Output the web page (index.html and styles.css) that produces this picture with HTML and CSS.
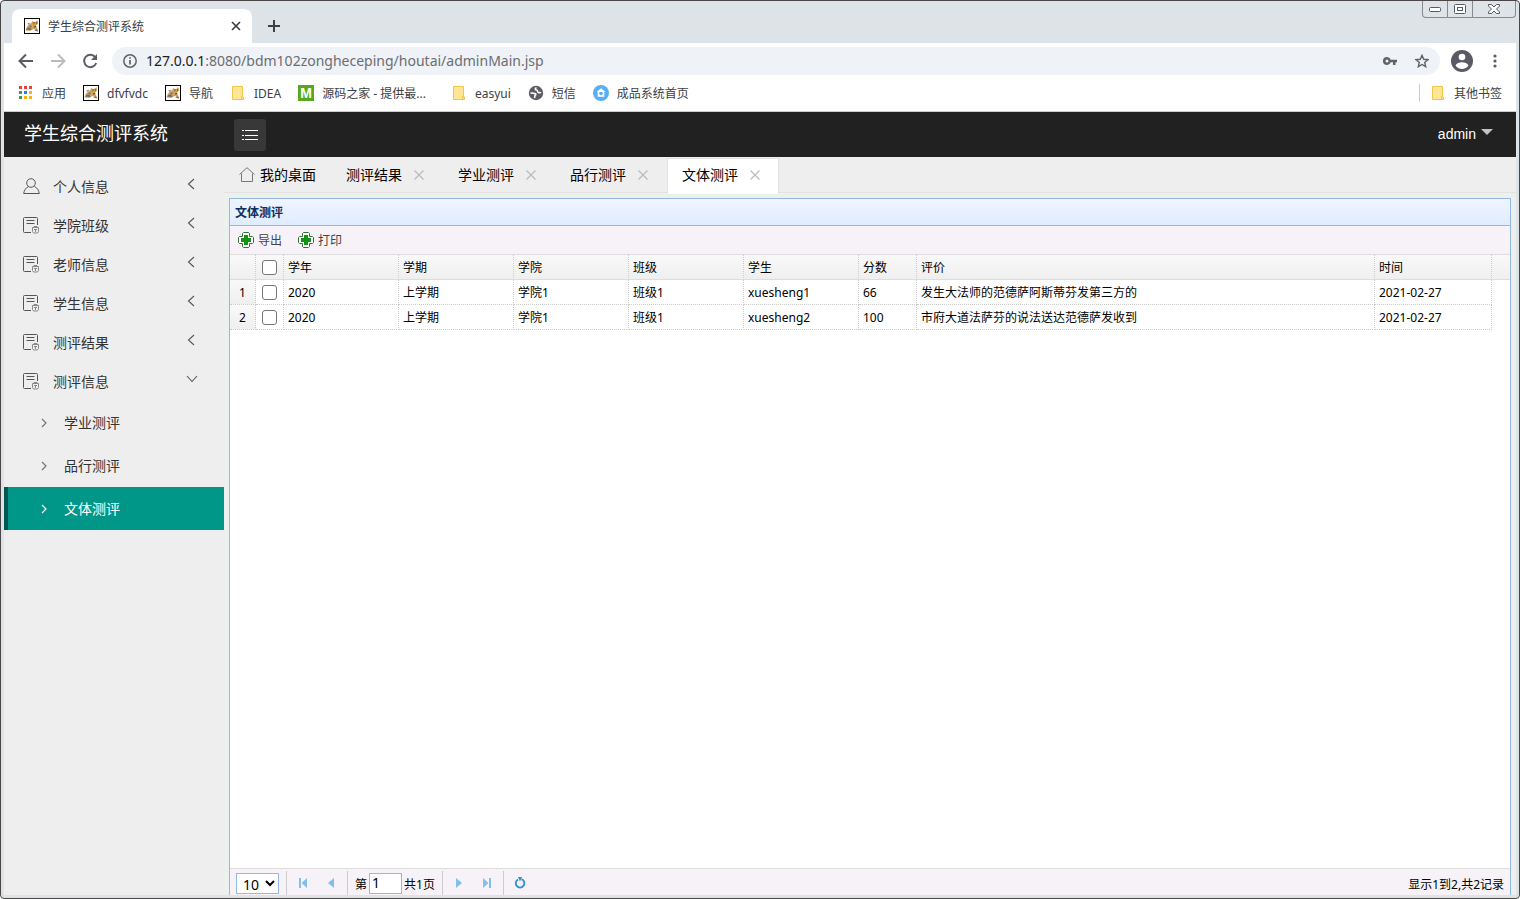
FILE: index.html
```html
<!DOCTYPE html>
<html lang="zh-CN">
<head>
<meta charset="utf-8">
<title>学生综合测评系统</title>
<link rel="stylesheet" href="styles.css">
</head>
<body>
<svg class="sprite" aria-hidden="true">
  <symbol id="cat" viewBox="0 0 16 16">
    <rect x=".5" y=".5" width="15" height="15" fill="#fff" stroke="#000"/>
    <path d="M1.500 12.500l1-3 1-1.500 2-2 2-1 .500-2 1.500 1h2l1.500-1.500.5 3-1.500 2 1 2.500 1.500 3.500-2-.5-2-2-2 .5-2.500 1.500z" fill="#c9a468"/>
    <path d="M2 12l2-2.500 2 .5 2 1.500-2 .5-2-.5zM3 6l3-1.500-1 2zM10 12l2 1 2 .500-1-2z" fill="#6f6a60"/>
    <path d="M8 3l1.500 1h2L13.500 2.500l.5 3-2 2-3-.500z" fill="#d79b33"/>
    <path d="M9.500 5h1M12 5h1M10 9l2-.5" stroke="#4a3a22" fill="none"/>
    <path d="M5 8l2-1 1 2-2 1z" fill="#8b7d69"/>
  </symbol>
  <symbol id="folder" viewBox="0 0 14 16">
    <path d="M1.500 1.500h10v10.500h1v2.500h-11z" fill="#ffe694" stroke="#f0c64a"/>
    <path d="M10.500 14.500v-3h1" fill="none" stroke="#f0c64a"/>
  </symbol>
  <symbol id="doc" viewBox="0 0 17 17">
    <path d="M14.500 8V1.500a1 1 0 0 0-1-1H1.500a1 1 0 0 0-1 1v13a1 1 0 0 0 1 1H8M3.500 3.500h8M3.500 6.500h8" fill="none" stroke="#555"/>
    <path d="M9.500 10.500h6v4l-1 1.500h-4l-1-1.500zM11 12.500h3M12.500 12v3M11 10V9.500h3v.5" fill="none" stroke="#888"/>
  </symbol>
  <symbol id="left" viewBox="0 0 8 12"><path d="M7 1L1.500 6 7 11" fill="none" stroke="#555" stroke-width="1.100"/></symbol>
  <symbol id="right" viewBox="0 0 6 10"><path d="M1 1l4 4-4 4" fill="none" stroke="currentColor" stroke-width="1.200"/></symbol>
  <symbol id="x" viewBox="0 0 10 10"><path d="M.5.500l9 9M9.500.500l-9 9" fill="none" stroke="currentColor" stroke-width="1.200"/></symbol>
  <symbol id="plus" viewBox="0 0 16 16">
    <path d="M5.500.500h5l1 1v3h3l1 1v5l-1 1h-3v3l-1 1h-5l-1-1v-3h-3l-1-1v-5l1-1h3v-3z" fill="#fff" stroke="#35703b"/>
    <path d="M6 3h4v3h3v4h-3v3H6v-3H3V6h3z" fill="#139313"/>
  </symbol>
</svg>

<div class="window">
  <div class="tabstrip">
    <div class="browser-tab">
      <svg class="i16"><use href="#cat"/></svg>
      <span class="browser-tab-title">学生综合测评系统</span>
      <button class="plain tab-close" aria-label="关闭标签页"><svg width="10" height="10" viewBox="0 0 10 10"><path d="M1 1l8 8M9 1L1 9" stroke="#3c4043" stroke-width="1.700"/></svg></button>
    </div>
    <button class="plain new-tab" aria-label="新标签页"><svg width="12" height="12" viewBox="0 0 12 12"><path d="M6 0v12M0 6h12" stroke="#3c4043" stroke-width="2"/></svg></button>
    <div class="win-controls">
      <button aria-label="最小化"><svg width="14" height="8" viewBox="0 0 14 8"><rect x="1.500" y="2.500" width="11" height="4" rx="1" fill="#fff" stroke="#555b66"/></svg></button>
      <button aria-label="还原"><svg width="14" height="12" viewBox="0 0 14 12"><rect x="1.500" y="1.500" width="11" height="9" rx="1" fill="#fff" stroke="#555b66"/><rect x="4.500" y="4.500" width="5" height="3" fill="none" stroke="#555b66"/></svg></button>
      <button class="wide" aria-label="关闭"><svg width="12" height="12" viewBox="0 0 12 12"><path d="M.5 1.500h3L6 4l2.500-2.500h3V3l-3 3 3 3v1.500h-3L6 8l-2.500 2.500h-3V9l3-3-3-3z" fill="#fff" stroke="#555b66"/></svg></button>
    </div>
  </div>

  <div class="toolbar">
    <button class="plain nav" aria-label="后退"><svg width="16" height="16" viewBox="0 0 16 16"><path d="M15 8H2M8 1.500L1.500 8 8 14.500" fill="none" stroke="#5c5b66" stroke-width="2"/></svg></button>
    <button class="plain nav" aria-label="前进"><svg width="16" height="16" viewBox="0 0 16 16"><path d="M1 8h13M8 1.500L14.500 8 8 14.500" fill="none" stroke="#bcbbc0" stroke-width="2"/></svg></button>
    <button class="plain nav" aria-label="重新加载"><svg width="16" height="16" viewBox="0 0 16 16"><path d="M13.500 4.500A6.200 6.200 0 1 0 14.200 10" fill="none" stroke="#5c5b66" stroke-width="2"/><path d="M15 1v6H9z" fill="#5c5b66"/></svg></button>
    <div class="omnibox">
      <svg width="14" height="14" viewBox="0 0 14 14"><circle cx="7" cy="7" r="6.200" fill="none" stroke="#5f6368" stroke-width="1.500"/><path d="M7 6v4.500M7 3.200v1.600" stroke="#5f6368" stroke-width="1.700"/></svg>
      <div class="url" role="textbox" aria-label="地址" contenteditable="true" spellcheck="false"><span class="host">127.0.0.1</span>:8080/bdm102zongheceping/houtai/adminMain.jsp</div>
      <button class="plain" aria-label="密码"><svg width="14" height="10" viewBox="0 0 14 10"><path d="M4 1a4 4 0 1 0 3.700 5.300H10V9h2.500V6.300H14V3.700H7.700A4 4 0 0 0 4 1zm0 2.500a1.500 1.500 0 1 1 0 3 1.500 1.500 0 0 1 0-3z" fill="#5f6368"/></svg></button>
      <button class="plain" aria-label="收藏"><svg width="14" height="14" viewBox="0 0 14 14"><path d="M7 1.300l1.700 4 4.300.4-3.300 2.800 1 4.200L7 10.500l-3.700 2.200 1-4.200L1 5.700l4.300-.4z" fill="none" stroke="#5f6368" stroke-width="1.400"/></svg></button>
    </div>
    <button class="plain avatar" aria-label="用户"><svg width="22" height="22" viewBox="0 0 22 22"><circle cx="11" cy="11" r="11" fill="#5a5965"/><circle cx="11" cy="7" r="3.300" fill="#fff"/><path d="M4.500 15.500c1-2.500 4-3.300 6.500-3.300s5.500.8 6.500 3.300a7.800 7.800 0 0 1-13 0z" fill="#fff"/></svg></button>
    <button class="plain" aria-label="菜单"><svg width="4" height="14" viewBox="0 0 4 14" fill="#5c5b66"><circle cx="2" cy="2" r="1.600"/><circle cx="2" cy="7" r="1.600"/><circle cx="2" cy="12" r="1.600"/></svg></button>
  </div>

  <nav class="bookmarks">
    <a href="#"><svg class="i16" viewBox="0 0 16 16"><path d="M1 1h3v3H1zM6 1h3v3H6zM11 1h3v3h-3z" fill="#ea4335"/><path d="M1 6h3v3H1zM1 11h3v3H1z" fill="#34a05a"/><path d="M6 6h3v3H6z" fill="#1a84f0"/><path d="M11 6h3v3h-3zM6 11h3v3H6zM11 11h3v3h-3z" fill="#f5b40a"/></svg>应用</a>
    <a href="#"><svg class="i16"><use href="#cat"/></svg>dfvfvdc</a>
    <a href="#"><svg class="i16"><use href="#cat"/></svg>导航</a>
    <a href="#"><svg class="i16"><use href="#folder"/></svg>IDEA</a>
    <a href="#"><span class="m-icon">M</span>源码之家 - 提供最...</a>
    <a href="#" class="gap"><svg class="i16"><use href="#folder"/></svg>easyui</a>
    <a href="#"><svg class="i16" viewBox="0 0 16 16"><circle cx="8" cy="8" r="7.200" fill="#5c5b66"/><path d="M2.500 8.200c2-.7 3 .3 4.300.3 1.200 0 1.400 1.300.4 1.800-.8.500 0 1.200-.7 2.700M8.500 2.800c-1.800.5-1.500 2 0 2.200 1.700.2.500 2 1.800 2.500.9.400 2-.3 2.900.3" fill="none" stroke="#fff" stroke-width="1.600"/></svg>短信</a>
    <a href="#"><svg class="i16" viewBox="0 0 16 16"><circle cx="8" cy="8" r="8" fill="#5aaef5"/><path d="M8 3.200L3.500 7h1.200v4.800h6.600V7h1.200z" fill="#fff"/><circle cx="8" cy="8.500" r="1.800" fill="#5aaef5"/></svg>成品系统首页</a>
    <a href="#" class="other"><svg class="i16"><use href="#folder"/></svg>其他书签</a>
  </nav>

  <header class="app-header">
    <h1>学生综合测评系统</h1>
    <button class="menu-toggle" aria-label="折叠菜单"><svg width="18" height="12" viewBox="0 0 18 12"><path d="M4 1.500h13M4 6.500h13M4 10.500h13M1 1.500h2M1 6.500h2M1 10.500h2" stroke="#fff"/></svg></button>
    <button class="plain user">admin<svg width="12" height="6" viewBox="0 0 12 6"><path d="M0 0h12L6 6z" fill="#c2c2c2"/></svg></button>
  </header>

  <div class="app-body">
    <aside class="sidebar">
      <a href="#" class="item"><svg class="ico" viewBox="0 0 17 17"><circle cx="8" cy="5" r="4.300" fill="none" stroke="#555"/><path d="M5.500 8.500C2.500 10 1.200 12.500.7 15.500h15.600c-.5-3-1.800-5.500-4.800-7" fill="none" stroke="#555"/></svg><span>个人信息</span><svg class="arrow"><use href="#left"/></svg></a>
      <a href="#" class="item"><svg class="ico"><use href="#doc"/></svg><span>学院班级</span><svg class="arrow"><use href="#left"/></svg></a>
      <a href="#" class="item"><svg class="ico"><use href="#doc"/></svg><span>老师信息</span><svg class="arrow"><use href="#left"/></svg></a>
      <a href="#" class="item"><svg class="ico"><use href="#doc"/></svg><span>学生信息</span><svg class="arrow"><use href="#left"/></svg></a>
      <a href="#" class="item"><svg class="ico"><use href="#doc"/></svg><span>测评结果</span><svg class="arrow"><use href="#left"/></svg></a>
      <a href="#" class="item"><svg class="ico"><use href="#doc"/></svg><span>测评信息</span><svg class="arrow down" viewBox="0 0 12 8"><path d="M1 1l5 5.500L11 1" fill="none" stroke="#555" stroke-width="1.100"/></svg></a>
      <a href="#" class="sub"><svg><use href="#right"/></svg><span>学业测评</span></a>
      <a href="#" class="sub"><svg><use href="#right"/></svg><span>品行测评</span></a>
      <a href="#" class="sub active"><svg><use href="#right"/></svg><span>文体测评</span></a>
    </aside>

    <main>
      <div class="tabs">
        <div class="tab home"><svg width="16" height="15" viewBox="0 0 16 15"><path d="M.500 7.500L8 .7l7.500 6.800M2.500 6.500v8h11v-8" fill="none" stroke="#777"/></svg><button class="plain name">我的桌面</button></div>
        <div class="tab"><button class="plain name">测评结果</button><button class="plain close" aria-label="关闭"><svg><use href="#x"/></svg></button></div>
        <div class="tab"><button class="plain name">学业测评</button><button class="plain close" aria-label="关闭"><svg><use href="#x"/></svg></button></div>
        <div class="tab"><button class="plain name">品行测评</button><button class="plain close" aria-label="关闭"><svg><use href="#x"/></svg></button></div>
        <div class="tab active"><button class="plain name">文体测评</button><button class="plain close" aria-label="关闭"><svg><use href="#x"/></svg></button></div>
      </div>

      <section class="panel">
        <h2>文体测评</h2>
        <div class="actions">
          <button class="plain"><svg class="i16"><use href="#plus"/></svg>导出</button>
          <button class="plain"><svg class="i16"><use href="#plus"/></svg>打印</button>
        </div>
        <div class="grid">
          <table>
            <colgroup><col class="c-num"><col class="c-check"><col class="c-std"><col class="c-std"><col class="c-std"><col class="c-std"><col class="c-std"><col class="c-score"><col><col class="c-date"><col class="c-end"></colgroup>
            <thead>
              <tr><th></th><th class="check"><input type="checkbox" aria-label="全选"></th><th>学年</th><th>学期</th><th>学院</th><th>班级</th><th>学生</th><th>分数</th><th>评价</th><th>时间</th><th></th></tr>
            </thead>
            <tbody>
              <tr><td class="num">1</td><td class="check"><input type="checkbox" aria-label="选择第1行"></td><td>2020</td><td>上学期</td><td>学院1</td><td>班级1</td><td>xuesheng1</td><td>66</td><td>发生大法师的范德萨阿斯蒂芬发第三方的</td><td>2021-02-27</td><td></td></tr>
              <tr><td class="num">2</td><td class="check"><input type="checkbox" aria-label="选择第2行"></td><td>2020</td><td>上学期</td><td>学院1</td><td>班级1</td><td>xuesheng2</td><td>100</td><td>市府大道法萨芬的说法送达范德萨发收到</td><td>2021-02-27</td><td></td></tr>
            </tbody>
          </table>
        </div>
        <footer class="pager">
          <select aria-label="每页条数"><option>10</option><option>20</option></select>
          <i class="sep"></i>
          <button class="plain pg" aria-label="首页"><svg width="10" height="10" viewBox="0 0 10 10"><path d="M1 0h2v10H1zM9 0v10L3.500 5z" fill="#82bfec"/></svg></button>
          <button class="plain pg" aria-label="上一页"><svg width="10" height="10" viewBox="0 0 10 10"><path d="M8 0v10L2 5z" fill="#82bfec"/></svg></button>
          <i class="sep"></i>
          <label for="page">第</label><input id="page" type="text" value="1"><span class="total">共1页</span>
          <i class="sep"></i>
          <button class="plain pg" aria-label="下一页"><svg width="10" height="10" viewBox="0 0 10 10"><path d="M2 0v10l6-5z" fill="#82bfec"/></svg></button>
          <button class="plain pg" aria-label="末页"><svg width="10" height="10" viewBox="0 0 10 10"><path d="M7 0h2v10H7zM1 0v10l5.500-5z" fill="#82bfec"/></svg></button>
          <i class="sep"></i>
          <button class="plain pg" aria-label="刷新"><svg width="12" height="12" viewBox="0 0 12 12"><path d="M7.500 2.200A4.300 4.300 0 1 1 4 2.500" fill="none" stroke="#2f8fd0" stroke-width="1.800"/><path d="M4 0h4L6 4.500z" fill="#2f8fd0"/></svg></button>
          <span class="info">显示1到2,共2记录</span>
        </footer>
      </section>
    </main>
  </div>
</div>
</body>
</html>
```

FILE: styles.css
```css
* { box-sizing: border-box; }

body {
  margin: 0;
  font-family: "Noto Sans", "Noto Sans CJK SC", sans-serif;
  font-size: 12px;
  color: #000;
}

svg { display: block; flex: none; }
a { color: inherit; text-decoration: none; }
h1, h2 { margin: 0; font-weight: normal; }

.sprite { position: absolute; width: 0; height: 0; }
.i16 { width: 16px; height: 16px; }

.plain {
  display: flex;
  align-items: center;
  padding: 0;
  border: 0;
  background: none;
  color: inherit;
  font: inherit;
  white-space: nowrap;
}

.window {
  display: flex;
  flex-direction: column;
  height: 100vh;
  padding: 0 3px 3px;
  border: 1px solid #4a4647;
  border-radius: 4px;
  background: #dee3e7;
}

/* Browser tab strip */
.tabstrip {
  display: flex;
  flex: none;
  height: 42px;
  padding-left: 8px;
}
.browser-tab {
  display: flex;
  align-items: center;
  width: 240px;
  margin-top: 8px;
  padding: 0 11px 0 12px;
  border-radius: 8px 8px 0 0;
  background: #fff;
  color: #3c4043;
}
.browser-tab-title { flex: 1; margin-left: 8px; }
.new-tab { height: 34px; margin: 8px 0 0 16px; }
.win-controls {
  display: flex;
  height: 17px;
  margin-left: auto;
  border: 1px solid #858994;
  border-top: 0;
  border-radius: 0 0 4px 4px;
}
.win-controls button {
  display: flex;
  align-items: center;
  justify-content: center;
  width: 25px;
  padding: 0;
  border: 0;
  border-right: 1px solid #858994;
  background: none;
}
.win-controls .wide { width: 42px; border-right: 0; }

/* Address bar */
.toolbar {
  display: flex;
  align-items: center;
  flex: none;
  height: 36px;
  padding: 0 19px 0 6px;
  background: #fff;
}
.nav { justify-content: center; width: 32px; height: 32px; }
.omnibox {
  display: flex;
  align-items: center;
  flex: 1;
  gap: 18px;
  height: 28px;
  margin: 0 11px 0 6px;
  padding: 0 11px;
  border-radius: 14px;
  background: #eff2f7;
}
.url {
  flex: 1;
  margin-left: -9px;
  color: #6b6d72;
  font-size: 14px;
  line-height: 20px;
  white-space: nowrap;
}
.host { color: #202124; }
.avatar { margin-right: 20px; }

/* Bookmarks */
.bookmarks {
  display: flex;
  align-items: center;
  flex: none;
  gap: 17px;
  height: 33px;
  padding: 0 14px 4px;
  border-bottom: 1px solid #ccc;
  background: #fff;
  color: #3c4043;
}
.bookmarks a { display: flex; align-items: center; gap: 8px; white-space: nowrap; }
.bookmarks .gap { margin-left: 8px; }
.bookmarks .other { margin-left: auto; padding-left: 10px; border-left: 1px solid #ccc; }
.m-icon {
  width: 16px;
  height: 16px;
  background: #57a81c;
  color: #fff;
  font: bold 14px/16px "Liberation Sans", sans-serif;
  text-align: center;
}

/* Application header */
.app-header {
  display: flex;
  align-items: center;
  flex: none;
  height: 45px;
  padding: 0 23px 0 20px;
  background: #212121;
  color: #fff;
}
.app-header h1 { width: 210px; padding-bottom: 4px; font-size: 18px; line-height: 24px; }
.menu-toggle {
  display: flex;
  align-items: center;
  justify-content: center;
  width: 32px;
  height: 32px;
  padding: 0;
  border: 0;
  border-radius: 3px;
  background: #383838;
}
.user {
  gap: 5px;
  margin-left: auto;
  padding-bottom: 2px;
  font: 14px/20px "Liberation Sans", "Noto Sans CJK SC", sans-serif;
}
.user svg { margin-bottom: 3px; }

.app-body { display: flex; flex: 1; min-height: 0; background: #eee; }

/* Sidebar */
.sidebar {
  flex: none;
  width: 220px;
  padding-top: 10px;
  color: #333;
  font-size: 14px;
}
.item { display: flex; align-items: center; height: 39px; padding: 0 29px 0 19px; }
.item span { flex: 1; margin-left: 13px; padding-bottom: 2px; }
.ico { width: 17px; height: 17px; }
.arrow { width: 8px; height: 12px; margin-bottom: 6px; }
.arrow.down { width: 12px; height: 8px; margin-right: -3px; }
.sub { display: flex; align-items: center; gap: 17px; height: 43px; padding-left: 37px; }
.sub span { padding-bottom: 2px; }
.sub svg { width: 6px; height: 10px; color: #777; }
.sub.active {
  padding-left: 33px;
  border-left: 4px solid #00574f;
  background: #009688;
  color: #fff;
}
.sub.active svg { color: #fff; }

/* Workspace tabs */
main { display: flex; flex: 1; flex-direction: column; min-width: 0; background: #edf1ed; }
.tabs {
  display: flex;
  flex: none;
  height: 36px;
  padding-left: 1px;
  border-bottom: 1px solid #e2e2e2;
  background: #eee;
  font-size: 14px;
}
.tab {
  display: flex;
  align-items: center;
  gap: 12px;
  width: 112px;
  height: 36px;
  padding: 0 0 1px 15px;
}
.tab.home { gap: 5px; width: 106px; padding-left: 14px; }
.tab.active {
  z-index: 1;
  height: 36px;
  margin-top: 1px;
  padding: 0 0 3px 14px;
  border: 1px solid #e2e2e2;
  border-bottom: 0;
  background: #fff;
}
.name { padding-bottom: 2px; }
.close svg { width: 10px; height: 10px; color: #bbb; }

/* Data panel */
.panel {
  display: flex;
  flex: 1;
  flex-direction: column;
  min-height: 0;
  margin: 5px 5px 0;
  border: 1px solid #95b8e7;
  border-bottom: 0;
  background: #fff;
}
.panel h2 {
  flex: none;
  height: 27px;
  padding-left: 5px;
  border-bottom: 1px solid #95b8e7;
  background: linear-gradient(#eff5ff, #e0ecff);
  color: #0e2d5f;
  font-size: 12px;
  font-weight: bold;
  line-height: 28px;
}
.actions {
  display: flex;
  flex: none;
  gap: 16px;
  height: 29px;
  padding-left: 8px;
  border-bottom: 1px solid #ddd;
  background: #f7f2f7;
  color: #444;
}
.actions .plain { gap: 4px; }
.grid { flex: 1; min-height: 0; overflow: auto; }

table { width: 100%; border-spacing: 0; table-layout: fixed; }
.c-num { width: 26px; }
.c-check { width: 28px; }
.c-std { width: 115px; }
.c-score { width: 58px; }
.c-date { width: 117px; }
.c-end { width: 18px; }
th, td {
  height: 25px;
  padding: 2px 4px 0;
  border-right: 1px dotted #ccc;
  border-bottom: 1px dotted #ccc;
  font-weight: normal;
  line-height: 20px;
  text-align: left;
  white-space: nowrap;
}
th { border-bottom: 1px solid #ddd; background: linear-gradient(#f9f9f9, #efefef); }
th:last-child { border-right: 0; }
td:last-child { border: 0; }
.num { padding: 2px 0 0; background: linear-gradient(#f9f9f9, #efefef); text-align: center; }
.check { padding: 0; }
.check input {
  display: block;
  width: 15px;
  height: 15px;
  margin: 0 auto;
  border: 1px solid #767676;
  border-radius: 3px;
  background: #fff;
  appearance: none;
}

/* Pager */
.pager {
  display: flex;
  align-items: center;
  flex: none;
  height: 27px;
  padding: 2px 6px 0;
  border-top: 1px solid #ddd;
  background: #f7f2f7;
}
.pager select, .pager input {
  height: 21px;
  border: 1px solid #95b8e7;
  background: #fff;
  color: #000;
  font: 14px/18px "Noto Sans", sans-serif;
}
.pager select { width: 43px; padding: 0 0 2px 2px; }
.pager input { width: 33px; padding: 0 2px 1px; }
.sep { width: 1px; height: 24px; margin: 0 7px; background: #ccc; }
.pager label { margin-right: 2px; padding-top: 2px; }
.total { margin-left: 2px; padding-top: 2px; }
.pg { justify-content: center; width: 18px; height: 24px; }
.pg + .pg { margin-left: 10px; }
.info { margin-left: auto; padding-top: 2px; }
```
